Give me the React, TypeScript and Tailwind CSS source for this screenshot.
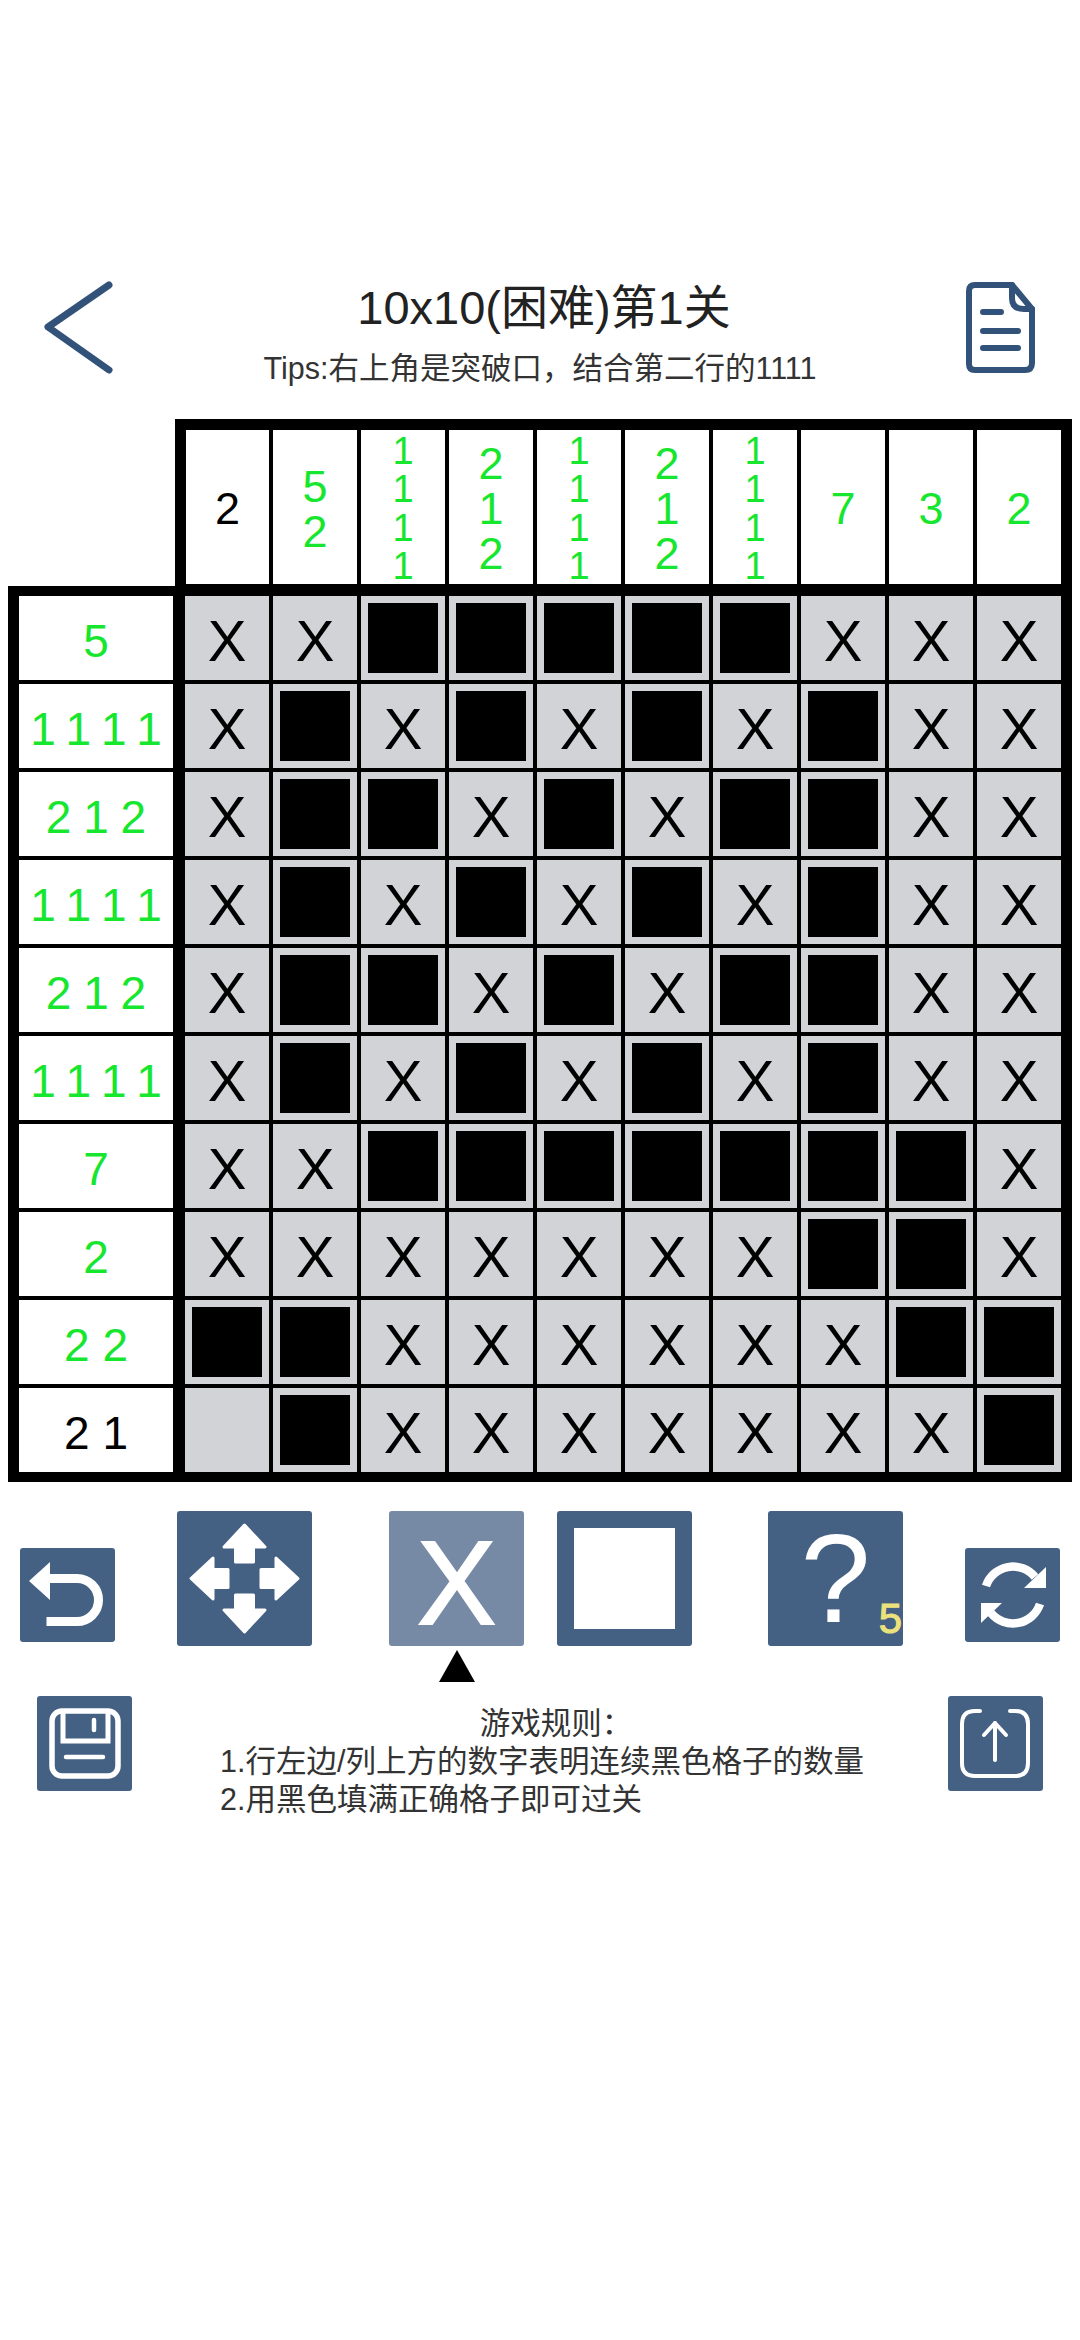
import React from "react";

const FONT = "font-['Liberation_Sans','Noto_Sans_CJK_SC',sans-serif]";
const GREEN = "text-[#17e62e]";

const topClues: { n: number[]; done: boolean }[] = [
  { n: [2], done: false },
  { n: [5, 2], done: true },
  { n: [1, 1, 1, 1], done: true },
  { n: [2, 1, 2], done: true },
  { n: [1, 1, 1, 1], done: true },
  { n: [2, 1, 2], done: true },
  { n: [1, 1, 1, 1], done: true },
  { n: [7], done: true },
  { n: [3], done: true },
  { n: [2], done: true },
];

const leftClues: { t: string; done: boolean }[] = [
  { t: "5", done: true },
  { t: "1 1 1 1", done: true },
  { t: "2 1 2", done: true },
  { t: "1 1 1 1", done: true },
  { t: "2 1 2", done: true },
  { t: "1 1 1 1", done: true },
  { t: "7", done: true },
  { t: "2", done: true },
  { t: "2 2", done: true },
  { t: "2 1", done: false },
];

const board = [
  "XXBBBBBXXX",
  "XBXBXBXBXX",
  "XBBXBXBBXX",
  "XBXBXBXBXX",
  "XBBXBXBBXX",
  "XBXBXBXBXX",
  "XXBBBBBBBX",
  "XXXXXXXBBX",
  "BBXXXXXXBB",
  "_BXXXXXXXB",
];

function Cell({ v }: { v: string }) {
  if (v === "B") {
    return (
      <div className="h-[84px] bg-[#d2d3d7] p-[7px]">
        <div className="h-full w-full bg-black" />
      </div>
    );
  }
  return (
    <div className="flex h-[84px] items-center justify-center bg-[#d2d3d7] pt-[5px] text-[58px] leading-none text-black">
      {v === "X" ? "X" : ""}
    </div>
  );
}

function IconBack() {
  return (
    <svg width="72" height="95" viewBox="0 0 72 95" fill="none" stroke="#33527a" strokeWidth="7" strokeLinecap="round" strokeLinejoin="round">
      <path d="M67 5 L6 47 L67 90" />
    </svg>
  );
}

function IconDoc() {
  return (
    <svg width="70" height="95" viewBox="0 0 70 95" fill="none" stroke="#33527a" strokeWidth="6" strokeLinecap="round" strokeLinejoin="round">
      <path d="M9 5 H46 L66 29 V83 Q66 90 59 90 H9 Q3 90 3 84 V11 Q3 5 9 5 Z" />
      <path d="M46 5 V18 Q46 29 58 29 H66" />
      <path d="M17 32 H35" />
      <path d="M17 51 H52" />
      <path d="M17 68 H52" />
    </svg>
  );
}

function IconUndo() {
  return (
    <svg width="95" height="94" viewBox="0 0 95 94" fill="none">
      <path d="M9 33 L30 14 V52 Z" fill="#fff" />
      <path d="M28 30.5 H57 A21.5 21.5 0 0 1 57 73.5 H26.5" stroke="#fff" strokeWidth="9" />
    </svg>
  );
}

function IconMove() {
  const arrow = "M67.5 14 L88 36 H76.5 V51 H58.5 V36 H47 Z";
  return (
    <svg width="135" height="135" viewBox="0 0 135 135" fill="#fff" stroke="#fff" strokeWidth="3" strokeLinejoin="round">
      <path d={arrow} />
      <path d={arrow} transform="rotate(90 67.5 67.5)" />
      <path d={arrow} transform="rotate(180 67.5 67.5)" />
      <path d={arrow} transform="rotate(270 67.5 67.5)" />
    </svg>
  );
}

function IconRefresh() {
  return (
    <svg width="95" height="94" viewBox="0 0 95 94" fill="none">
      <path d="M21 38 A28.5 28.5 0 0 1 70 29" stroke="#fff" strokeWidth="8.5" />
      <path d="M81 19 V40 H59 Z" fill="#fff" />
      <path d="M75 56 A28.5 28.5 0 0 1 26 65" stroke="#fff" strokeWidth="8.5" />
      <path d="M16 75 V55 H37 Z" fill="#fff" />
    </svg>
  );
}

function IconSave() {
  return (
    <svg width="95" height="95" viewBox="0 0 95 95" fill="none" stroke="#fff">
      <rect x="15" y="15" width="66" height="65" rx="10" strokeWidth="5.5" />
      <path d="M26 15 V45 H71 V15" strokeWidth="5" />
      <path d="M57 24 V34" strokeWidth="4.5" strokeLinecap="round" />
      <path d="M29 61 H66" strokeWidth="4.5" strokeLinecap="round" />
    </svg>
  );
}

function IconUpload() {
  return (
    <svg width="95" height="95" viewBox="0 0 95 95" fill="none" stroke="#fff" strokeWidth="4" strokeLinecap="round" strokeLinejoin="round">
      <path d="M32 15 H27 Q14 15 14 28 V67 Q14 80 27 80 H67 Q80 80 80 67 V28 Q80 15 67 15 H62" />
      <path d="M47 27 V64" />
      <path d="M36 39 L47 27 L58 39" />
    </svg>
  );
}

export default function App() {
  return (
    <div className={`${FONT} min-h-[2340px] bg-white pt-[280px]`}>
      <header className="flex h-[95px] items-start pl-[42px] pr-[44px]">
        <IconBack />
        <div className="flex flex-1 flex-col items-center">
          <div className="pl-[8px] text-[47px] leading-[56px] text-[#222222]">10x10(困难)第1关</div>
          <div className="mt-[13px] text-[30.5px] leading-[38px] text-[#333333]">Tips:右上角是突破口，结合第二行的1111</div>
        </div>
        <IconDoc />
      </header>

      <section className="mt-[44px] flex flex-col items-start pl-[8px]">
        <div className="ml-[167px] w-[897px] bg-black pb-[2px] pl-[11px] pr-[11px] pt-[11px]">
          <div className="grid grid-cols-[83px_repeat(9,84px)] gap-x-[4px]">
            {topClues.map((c, i) => (
              <div
                key={i}
                className={`flex h-[154px] flex-col items-center justify-center bg-white pt-[3px] ${
                  c.n.length === 4 ? "text-[38px] leading-[38.3px]" : "text-[45px] leading-[45px]"
                } ${c.done ? GREEN : "text-black"}`}
              >
                {c.n.map((d, j) => (
                  <span key={j}>{d}</span>
                ))}
              </div>
            ))}
          </div>
        </div>
        <div className="flex w-[1064px] gap-[12px] bg-black pb-[10px] pl-[11px] pr-[11px] pt-[10px]">
          <div className="flex w-[154px] flex-col gap-[4px]">
            {leftClues.map((c, i) => (
              <div
                key={i}
                className={`flex h-[84px] items-center justify-center whitespace-pre bg-white pt-[5px] text-[46px] leading-none ${
                  c.t === "1 1 1 1" ? "[word-spacing:-3px]" : c.t === "2 1 2" ? "[word-spacing:-1px]" : ""
                } ${c.done ? GREEN : "text-black"}`}
              >
                {c.t}
              </div>
            ))}
          </div>
          <div className="grid grid-cols-[repeat(10,84px)] gap-[4px]">
            {board.flatMap((row, r) => row.split("").map((v, c) => <Cell key={`${r}-${c}`} v={v} />))}
          </div>
        </div>
      </section>

      <section className="mt-[29px] flex items-start pl-[20px]">
        <button className="mt-[37px] flex h-[94px] w-[95px] items-center justify-center rounded-[3px] bg-[#446083]">
          <IconUndo />
        </button>
        <button className="ml-[62px] flex h-[135px] w-[135px] items-center justify-center rounded-[3px] bg-[#446083]">
          <IconMove />
        </button>
        <div className="ml-[77px] flex w-[135px] flex-col items-center">
          <button className="flex h-[135px] w-[135px] items-center justify-center rounded-[3px] bg-[#7689a5] pt-[8px] text-[118px] leading-none text-white [-webkit-text-stroke:2px_white]">
            X
          </button>
          <svg className="mt-[4px]" width="36" height="32" viewBox="0 0 36 32">
            <path d="M18 0 L36 32 H0 Z" fill="#000" />
          </svg>
        </div>
        <button className="ml-[33px] h-[135px] w-[135px] rounded-[3px] bg-[#446083] px-[17px] py-[17px]">
          <div className="h-full w-full bg-white" />
        </button>
        <button className="relative ml-[76px] flex h-[135px] w-[135px] items-center justify-center rounded-[3px] bg-[#446083] text-[126px] leading-none text-white">
          ?
          <span className="absolute bottom-[6px] right-[1px] text-[42px] leading-none text-[#ece27c] [-webkit-text-stroke:1px_#ece27c]">5</span>
        </button>
        <button className="ml-[62px] mt-[37px] flex h-[94px] w-[95px] items-center justify-center rounded-[3px] bg-[#446083]">
          <IconRefresh />
        </button>
      </section>

      <section className="mt-[14px] flex items-start pl-[37px] pr-[37px]">
        <button className="flex h-[95px] w-[95px] items-center justify-center rounded-[3px] bg-[#446083]">
          <IconSave />
        </button>
        <div className="ml-[88px] w-[650px] pt-[8px] text-[30.5px] leading-[38px] text-[#333333]">
          <div className="pl-[22px] text-center">游戏规则：</div>
          <div>1.行左边/列上方的数字表明连续黑色格子的数量</div>
          <div>2.用黑色填满正确格子即可过关</div>
        </div>
        <button className="ml-auto flex h-[95px] w-[95px] items-center justify-center rounded-[3px] bg-[#446083]">
          <IconUpload />
        </button>
      </section>
    </div>
  );
}
